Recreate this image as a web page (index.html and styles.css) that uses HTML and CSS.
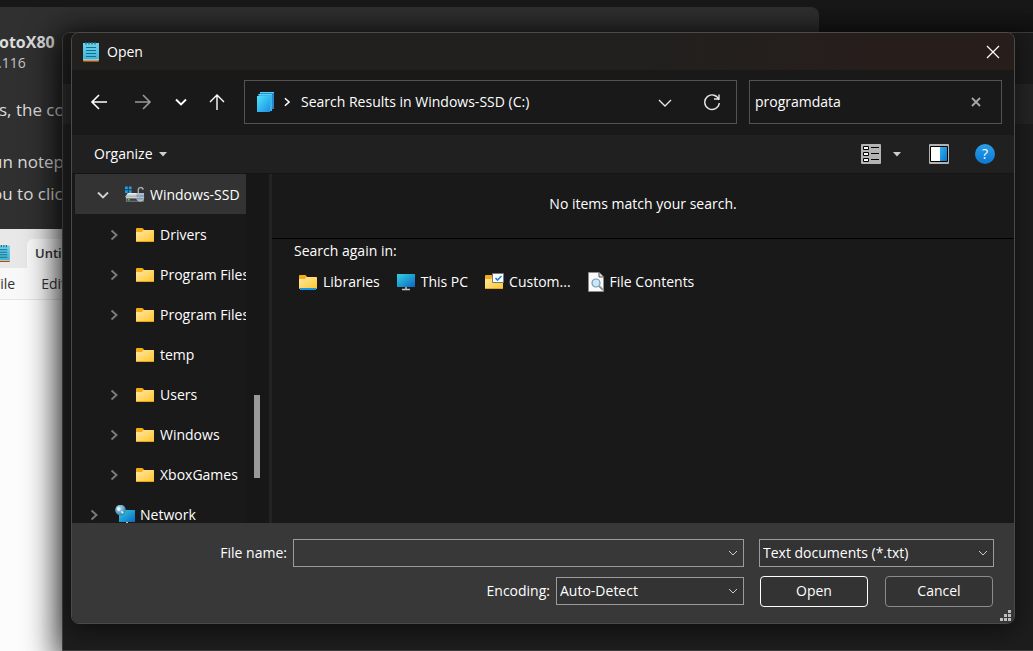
FILE: index.html
```html
<!DOCTYPE html>
<html lang="en">
<head>
<meta charset="utf-8">
<title>Open</title>
<link rel="stylesheet" href="styles.css">
</head>
<body>
<svg class="defs" aria-hidden="true">
  <defs>
    <linearGradient id="gFolder" x1="0" y1="0" x2="1" y2="1"><stop offset="0" stop-color="#ffe9a6"/><stop offset="1" stop-color="#ffc52e"/></linearGradient>
    <linearGradient id="gScreen" x1="0" y1="0" x2="1" y2="1"><stop offset="0" stop-color="#33d0e0"/><stop offset="1" stop-color="#0a68c4"/></linearGradient>
    <linearGradient id="gPages" x1="0" y1="0" x2="1" y2="1"><stop offset="0" stop-color="#4ce3fb"/><stop offset="1" stop-color="#1c8fe4"/></linearGradient>
    <linearGradient id="gPane" x1="0" y1="0" x2="1" y2="1"><stop offset="0" stop-color="#2fb4ee"/><stop offset="1" stop-color="#0b72cc"/></linearGradient>
    <linearGradient id="gNote" x1="0" y1="0" x2="0" y2="1"><stop offset="0" stop-color="#6ed2ec"/><stop offset="1" stop-color="#3fb4d8"/></linearGradient>
    <linearGradient id="gDrive" x1="0" y1="0" x2="0" y2="1"><stop offset="0" stop-color="#f4f4f4"/><stop offset="1" stop-color="#a9adb2"/></linearGradient>
    <radialGradient id="gGlobe" cx="0.4" cy="0.35" r="0.7"><stop offset="0" stop-color="#b9e3f5"/><stop offset="1" stop-color="#2478a8"/></radialGradient>
    <symbol id="folder" viewBox="0 0 20 16">
      <path d="M1 4V2q0-1 1-1h5q1 0 1.500 1l.5 1h9q1 0 1 1v4H1z" fill="#f5ad16"/>
      <path d="M1 5h6l1.500-2H18q1 0 1 1v10q0 1-1 1H2q-1 0-1-1z" fill="url(#gFolder)"/>
      <path d="M1 14h18q0 1-1 1H2q-1 0-1-1z" fill="#e7a51b"/>
    </symbol>
    <symbol id="notepad" viewBox="0 0 16 20">
      <rect y="1" width="16" height="19" rx="1" fill="#a3500d"/>
      <rect y="1" width="16" height="17.500" rx="1" fill="#e2e2dc"/>
      <rect y="1" width="16" height="16.500" rx="1" fill="url(#gNote)"/>
      <path d="M3 0v2.500M6 0v2.500M9 0v2.500M12 0v2.500" stroke="#157190" stroke-width="1.400"/>
      <path d="M3 5.500h10M3 8.500h10M3 11.500h10M3 14.500h10" stroke="#14708f" stroke-width="1.200"/>
    </symbol>
    <symbol id="right" viewBox="0 0 12 12"><path d="M3.500 1.500L8.500 6l-5 4.500" fill="none" stroke="currentColor" stroke-width="1.900"/></symbol>
    <symbol id="down" viewBox="0 0 14 14"><path d="M2 4.500l5 5 5-5" fill="none" stroke="currentColor" stroke-width="1.900"/></symbol>
    <symbol id="thin" viewBox="0 0 10 10"><path d="M1 3l4 4 4-4" fill="none" stroke="currentColor" stroke-width="1"/></symbol>
    <symbol id="caret" viewBox="0 0 8 5"><path d="M0 0h8L4 4.500z" fill="currentColor"/></symbol>
  </defs>
</svg>

<main class="desktop">
  <section class="chat">
    <h2 class="chat-name">otoX80 <span class="chat-dot"></span></h2>
    <p class="chat-meta">.116</p>
    <p class="chat-line chat-first">s, the co</p>
    <p class="chat-line chat-cut">un notep</p>
    <p class="chat-line chat-cut chat-last">ou to click</p>
    <div class="shot">
      <div class="shot-tabs">
        <svg class="shot-icon"><use href="#notepad"/></svg>
        <span class="shot-tab">Untitled</span>
      </div>
      <div class="shot-menu"><span>File</span><span>Edit</span></div>
    </div>
  </section>

  <div class="under"><div class="under-title"></div><div class="under-menu"></div></div>

  <section class="dialog" role="dialog" aria-labelledby="dlg-title">
    <header class="title">
      <svg class="title-icon"><use href="#notepad"/></svg>
      <h1 id="dlg-title">Open</h1>
      <button class="icon-btn close" aria-label="Close"><svg width="14" height="14" viewBox="0 0 14 14"><path d="M1 1l12 12M13 1L1 13" stroke="#fff" stroke-width="1.200"/></svg></button>
    </header>

    <nav class="nav">
      <div class="nav-arrows">
        <button class="icon-btn" aria-label="Back"><svg width="18" height="18" viewBox="0 0 18 18"><path d="M17 9H2M9 2L2 9l7 7" fill="none" stroke="#fff" stroke-width="1.600"/></svg></button>
        <button class="icon-btn" aria-label="Forward"><svg width="18" height="18" viewBox="0 0 18 18"><path d="M1 9h15M9 2l7 7-7 7" fill="none" stroke="#999" stroke-width="1.600"/></svg></button>
        <button class="icon-btn recent" aria-label="Recent locations"><svg width="14" height="14"><use href="#down"/></svg></button>
        <button class="icon-btn up" aria-label="Up"><svg width="18" height="18" viewBox="0 0 18 18"><path d="M9 17V2M2 9l7-7 7 7" fill="none" stroke="#fff" stroke-width="1.400"/></svg></button>
      </div>
      <div class="address">
        <svg width="18" height="22" viewBox="0 0 18 22"><path d="M4 1h14v17H4z" fill="#2687cf"/><path d="M2.500 3H16v17H2.500z" fill="#38b3ec"/><path d="M4 1h14v1H4zM2.500 3H16v1H2.500z" fill="#52d9f5"/><path d="M1 5h13v16H1z" fill="url(#gPages)"/></svg>
        <svg class="crumb" width="10" height="10"><use href="#right"/></svg>
        <span class="path">Search Results in Windows-SSD (C:)</span>
        <button class="icon-btn" aria-label="Previous locations"><svg width="16" height="16" viewBox="0 0 16 16"><path d="M2 6l6 6 6-6" fill="none" stroke="#e6e6e6" stroke-width="1.400"/></svg></button>
        <button class="icon-btn refresh" aria-label="Refresh"><svg width="18" height="18" viewBox="0 0 18 18"><path d="M16 7a7.300 7.300 0 1 0 .3 3M16 1.500v4.500h-5" fill="none" stroke="#e6e6e6" stroke-width="1.400"/></svg></button>
      </div>
      <div class="search">
        <input type="text" value="programdata" aria-label="Search">
        <button class="icon-btn" aria-label="Clear search"><svg width="10" height="10" viewBox="0 0 10 10"><path d="M1 1l8 8M9 1L1 9" stroke="#a8a8a8" stroke-width="1.800"/></svg></button>
      </div>
    </nav>

    <div class="toolbar">
      <button class="organize">Organize <svg width="8" height="5"><use href="#caret"/></svg></button>
      <button class="icon-btn" aria-label="Change view"><svg width="20" height="20" viewBox="0 0 20 20"><rect width="20" height="20" rx="1" fill="#b3b3b3"/><g fill="#fff" stroke="#000" stroke-width="1"><path d="M2.500 2.500h5v3h-5zM2.500 8.500h5v3h-5zM2.500 14.500h5v3h-5z"/></g><path d="M10 3.500h8M10 9.500h8M10 15.500h8" stroke="#000"/></svg></button>
      <button class="icon-btn view-more" aria-label="More view options"><svg width="8" height="5"><use href="#caret"/></svg></button>
      <button class="icon-btn" aria-label="Preview pane"><svg width="20" height="20" viewBox="0 0 20 20"><rect width="20" height="20" rx="1" fill="#b3b3b3"/><path d="M1.500 2.500h17v15h-17z" fill="#fff" stroke="#000"/><path d="M11 3h7v14h-7z" fill="url(#gPane)"/></svg></button>
      <button class="icon-btn help" aria-label="Help">?</button>
    </div>

    <div class="body">
      <aside class="side">
        <ul class="tree">
          <li class="root selected"><svg class="chev open"><use href="#down"/></svg><svg width="21" height="18" viewBox="0 0 22 18"><path d="M4 7h14l3 4H1z" fill="url(#gDrive)"/><path d="M2 11h19v5H2z" fill="#777c80"/><path d="M2 11h19v1.500H2z" fill="#cfd2d4"/><path d="M3 13h14v2H3z" fill="#3c4043"/><path d="M4 14h2" stroke="#31d45c" stroke-width="1.500"/><path d="M1 0h3v3H1zM5 0h3v3H5zM1 4h3v3H1zM5 4h3v3H5z" fill="#14a0ee"/><path d="M15 8V4a2.500 2.500 0 0 1 5-.5" fill="none" stroke="#a4a9ad" stroke-width="1.500"/><path d="M13 7h8v5q0 4-4 4t-4-4z" fill="#aebccb"/><path d="M13 10h8M13.500 13h7" stroke="#6d8aa8"/></svg><span>Windows-SSD</span></li>
          <li class="child"><svg class="chev"><use href="#right"/></svg><svg class="fold"><use href="#folder"/></svg><span>Drivers</span></li>
          <li class="child"><svg class="chev"><use href="#right"/></svg><svg class="fold"><use href="#folder"/></svg><span>Program Files</span></li>
          <li class="child"><svg class="chev"><use href="#right"/></svg><svg class="fold"><use href="#folder"/></svg><span>Program Files</span></li>
          <li class="child"><svg class="chev"></svg><svg class="fold"><use href="#folder"/></svg><span>temp</span></li>
          <li class="child"><svg class="chev"><use href="#right"/></svg><svg class="fold"><use href="#folder"/></svg><span>Users</span></li>
          <li class="child"><svg class="chev"><use href="#right"/></svg><svg class="fold"><use href="#folder"/></svg><span>Windows</span></li>
          <li class="child"><svg class="chev"><use href="#right"/></svg><svg class="fold"><use href="#folder"/></svg><span>XboxGames</span></li>
          <li class="net"><svg class="chev"><use href="#right"/></svg><svg width="20" height="20" viewBox="0 0 20 20"><path d="M4 5h16v12H4z" fill="url(#gScreen)"/><path d="M12 17v3" stroke="#c4c8cb" stroke-width="2"/><circle cx="5.500" cy="5" r="5.300" fill="url(#gGlobe)"/><path d="M2 3q2-2 3 0t-1 3q-2 0-2-3zM6 6l3 1-2 2z" fill="#e9f6fb"/></svg><span>Network</span></li>
        </ul>
        <div class="scroll"><div class="thumb"></div></div>
      </aside>
      <section class="results">
        <p class="empty">No items match your search.</p>
        <div class="again">
          <p>Search again in:</p>
          <div class="places">
            <button><svg width="20" height="18" viewBox="0 0 20 18"><use href="#folder" y="1" width="20" height="16"/><path d="M2 15h16v2H2z" fill="#1597e5"/></svg>Libraries</button>
            <button><svg width="20" height="18" viewBox="0 0 20 18"><path d="M1 1h18v13H1z" fill="url(#gScreen)"/><path d="M10 14v2M6 16.500h8" stroke="#c4c8cb" stroke-width="1.500"/></svg>This PC</button>
            <button><svg width="20" height="18" viewBox="0 0 20 18"><use href="#folder" y="1" width="20" height="16"/><path d="M8.500.5h11v9h-11z" fill="#fff" stroke="#777"/><path d="M11.500 5l2 2 4-4" fill="none" stroke="#1583d8" stroke-width="1.600"/></svg>Custom...</button>
            <button><svg width="18" height="20" viewBox="0 0 18 20"><path d="M1.500.5H12L16.500 5v14.500h-15z" fill="#fafafa" stroke="#8b8b8b"/><path d="M12 .5V5h4.500" fill="#ddd" stroke="#555"/><circle cx="9" cy="11" r="4" fill="#c9e7fa" stroke="#7d98ac" stroke-width="1.200"/><path d="M12 14l4 4" stroke="#7d98ac" stroke-width="1.800"/></svg>File Contents</button>
          </div>
        </div>
      </section>
    </div>

    <footer class="footer">
      <div class="row">
        <label for="fname">File name:</label>
        <div class="field"><input id="fname" type="text"><svg><use href="#thin"/></svg></div>
        <div class="field type"><select aria-label="File type"><option>Text documents (*.txt)</option></select><svg><use href="#thin"/></svg></div>
      </div>
      <div class="row">
        <label for="enc">Encoding:</label>
        <div class="field enc"><select id="enc"><option>Auto-Detect</option></select><svg><use href="#thin"/></svg></div>
        <div class="actions"><button class="primary">Open</button><button>Cancel</button></div>
      </div>
      <svg class="grip" width="11" height="11" viewBox="0 0 11 11"><path d="M8 0h3v3H8zM8 4h3v3H8zM8 8h3v3H8zM4 4h3v3H4zM4 8h3v3H4zM0 8h3v3H0z" fill="#bfbfbf"/></svg>
    </footer>
  </section>
</main>
</body>
</html>
```
FILE: styles.css
```css
* { box-sizing: border-box; }
body {
  margin: 0;
  background: #181818;
  color: #fff;
  font: 14px/20px "Open Sans", "Noto Sans", sans-serif;
}
h1, h2, p, ul { margin: 0; padding: 0; font-weight: 400; }
ul { list-style: none; }
svg { flex: none; display: block; }
button, input, select { font: inherit; color: inherit; margin: 0; }
button { background: none; border: 0; padding: 0; }
.defs { position: absolute; width: 0; height: 0; }
.desktop { position: relative; height: 100vh; overflow: hidden; }

/* chat window at the back */
.chat {
  position: absolute;
  top: 7px;
  bottom: 0;
  left: 0;
  right: 214px;
  display: flex;
  flex-direction: column;
  padding-top: 22px;
  border-radius: 0 8px 0 0;
  background: #303030;
  color: #dcdcdc;
  font-size: 17px;
  line-height: 32px;
  white-space: nowrap;
}
.chat-name { display: flex; align-items: center; gap: 7px; margin-left: -1px; font-size: 16px; line-height: 26px; font-weight: 700; }
.chat-dot { width: 8px; height: 8px; border-radius: 50%; background: #2b8fd6; }
.chat-meta { margin-left: -2px; font-size: 14px; line-height: 16px; color: #c4c4c4; }
.chat-first { margin: 23px 0 20px -1px; }
.chat-cut { margin-left: -8px; }
.chat-last { margin-bottom: 19px; }
.shot { flex: 1; background: #fcfcfc; color: #333; font-size: 14px; }
.shot-tabs { display: flex; align-items: flex-end; height: 39px; background: #e8e8e8; }
.shot-icon { width: 14px; height: 17px; margin: 0 17px 6px -4px; }
.shot-tab { padding: 0 8px; border-radius: 6px 6px 0 0; background: #f8f8f8; font-size: 13px; line-height: 29px; font-weight: 600; }
.shot-menu { display: flex; gap: 26px; height: 32px; margin-left: -7px; border-bottom: 1px solid #e5e5e5; background: #f8f8f8; }

/* editor window that owns the dialog */
.under {
  position: absolute;
  top: 32px;
  bottom: 0;
  left: 62px;
  right: -10px;
  border: 1px solid #3c3c3c;
  border-radius: 8px 0 0 0;
  background: #1d1d1d;
  box-shadow: 0 6px 32px 6px rgba(0, 0, 0, .75);
  overflow: hidden;
}
.under-title { height: 51px; background: #1b1b1b; }
.under-menu { height: 40px; background: #242424; }

.dialog {
  position: absolute;
  top: 32px;
  bottom: 27px;
  left: 71px;
  right: 18px;
  display: flex;
  flex-direction: column;
  border: 1px solid #4a4a4a;
  border-radius: 8px;
  background: #191919;
  box-shadow: 0 6px 24px rgba(0, 0, 0, .5);
  overflow: hidden;
}
.icon-btn { display: inline-flex; align-items: center; justify-content: center; flex: none; }

.title { display: flex; align-items: center; gap: 8px; height: 37px; padding: 0 14px 0 11px; background: linear-gradient(90deg, #21201e 60%, #271e1c 85%); }
.title-icon { width: 16px; height: 20px; }
.title h1 { flex: 1; font-size: 14px; }

.nav { display: flex; height: 65px; padding: 10px 12px 10px 18px; }
.nav > * { height: 44px; }
.nav-arrows { display: flex; align-items: center; width: 154px; }
.nav-arrows button { margin-right: 26px; }
.nav-arrows .recent { margin: 0 20px 0 -4px; }
.nav-arrows .up { margin-right: 0; }
.address, .search { display: flex; align-items: center; border: 1px solid #535353; }
.address { flex: 1; padding: 0 15px 0 11px; min-width: 0; }
.crumb { margin: 0 9px 0 8px; }
.path { flex: 1; white-space: nowrap; overflow: hidden; }
.refresh { margin-left: 30px; }
.search { width: 253px; margin-left: 12px; padding: 0 20px 0 5px; }
.search input { flex: 1; min-width: 0; padding: 0; border: 0; outline: 0; background: none; }

.toolbar { display: flex; align-items: center; height: 39px; padding: 0 19px 0 22px; border-bottom: 1px solid #151515; background: #202020; }
.organize { display: flex; align-items: center; gap: 6px; margin-right: auto; }
.organize svg, .view-more { color: #cfcfcf; }
.view-more { margin: 0 28px 0 12px; }
.help { width: 20px; height: 20px; margin-left: 26px; border-radius: 50%; background: linear-gradient(#2a9fe8, #0a78d2); }

.body { flex: 1; display: flex; min-height: 0; }
.side { display: flex; width: 200px; padding-left: 3px; border-right: 3px solid #232323; background: #191919; overflow: hidden; }
.tree { width: 171px; overflow: hidden; }
.tree li { display: flex; align-items: center; gap: 5px; height: 40px; padding-top: 1px; white-space: nowrap; }
.tree .selected { background: #333; }
.tree .root { padding-left: 21px; }
.tree .child { padding-left: 33px; }
.tree .net { padding-left: 13px; }
.chev { width: 12px; height: 12px; margin-right: 10px; color: #7b7b7b; }
.tree .open { width: 14px; height: 14px; margin-right: 9px; color: #d0d0d0; }
.fold { width: 20px; height: 16px; }
.scroll { flex: 1; display: flex; flex-direction: column; justify-content: flex-end; padding: 0 0 45px 8px; background: #171717; }
.thumb { width: 6px; height: 83px; background: #999; }

.results { flex: 1; min-width: 0; }
.empty { padding: 20px 0 24px; border-bottom: 1px solid #000; text-align: center; }
.again { padding: 2px 22px; }
.places { display: flex; gap: 16px; padding: 11px 0 0 4px; }
.places button { display: flex; align-items: center; gap: 5px; white-space: nowrap; }

.footer { position: relative; display: flex; flex-direction: column; gap: 10px; height: 100px; padding: 16px 20px 0; background: #383838; }
.row { display: flex; align-items: center; justify-content: flex-end; height: 28px; }
.row label { margin-right: 6px; }
.field { display: flex; align-items: center; position: relative; width: 451px; height: 28px; border: 1px solid #9b9b9b; }
.field input, .field select { appearance: none; width: 100%; height: 100%; padding: 0 24px 0 3px; border: 0; border-radius: 0; outline: 0; background: none; }
.field select { background: #333; }
.field svg { position: absolute; right: 5px; width: 10px; height: 10px; color: #ccc; pointer-events: none; }
.type { width: 235px; margin-left: 15px; }
.enc { width: 188px; }
.actions { display: flex; gap: 17px; margin-left: 16px; padding-right: 1px; }
.actions button { width: 108px; height: 31px; border: 1px solid #8b8b8b; border-radius: 4px; background: #333; }
.actions .primary { border-color: #fff; }
.grip { position: absolute; right: 3px; bottom: 2px; }
```
